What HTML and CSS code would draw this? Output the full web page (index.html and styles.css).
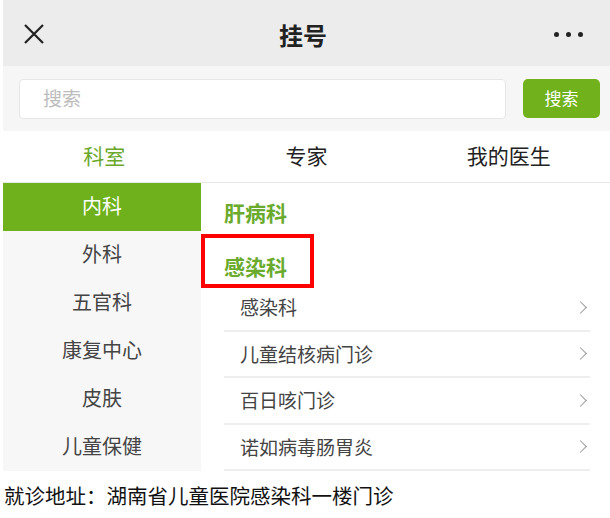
FILE: index.html
```html
<!DOCTYPE html>
<html lang="zh-CN">
<head>
    <meta charset="UTF-8">
    <meta name="viewport" content="width=device-width, initial-scale=1.0">
    <title>挂号</title>
    <link rel="stylesheet" href="styles.css">
</head>
<body>
    <div class="app">
        <div class="topbar">
            <span class="topbar-close">
                <svg width="22" height="22" viewBox="0 0 22 22"><path d="M2 2 L20 20 M20 2 L2 20" stroke="#222" stroke-width="2.2" fill="none"/></svg>
            </span>
            <span class="topbar-title">挂号</span>
            <span class="topbar-more"><i></i><i></i><i></i></span>
        </div>

        <div class="search">
            <div class="search-input">搜索</div>
            <button class="search-btn">搜索</button>
        </div>

        <div class="tabs">
            <div class="tab active">科室</div>
            <div class="tab">专家</div>
            <div class="tab">我的医生</div>
        </div>

        <div class="content">
            <ul class="side">
                <li class="side-item active">内科</li>
                <li class="side-item">外科</li>
                <li class="side-item">五官科</li>
                <li class="side-item">康复中心</li>
                <li class="side-item">皮肤</li>
                <li class="side-item">儿童保健</li>
            </ul>
            <div class="panel">
                <div class="group-title">肝病科</div>
                <div class="group-title marked">感染科</div>
                <ul class="dept-list">
                    <li class="dept">感染科<span class="chev"></span></li>
                    <li class="dept">儿童结核病门诊<span class="chev"></span></li>
                    <li class="dept">百日咳门诊<span class="chev"></span></li>
                    <li class="dept">诺如病毒肠胃炎<span class="chev"></span></li>
                </ul>
            </div>
        </div>

        <p class="address">就诊地址：湖南省儿童医院感染科一楼门诊</p>
    </div>
</body>
</html>
```

FILE: styles.css
```css
* {
    box-sizing: border-box;
}
body {
    margin: 0;
    background: #fff;
    font-family: "Noto Sans CJK SC", "Noto Sans", sans-serif;
    color: #333;
}
ul {
    margin: 0;
    padding: 0;
    list-style: none;
}
.app {
    margin-left: 3px;
    width: 607px;
}

.topbar {
    height: 66px;
    background: #ececec;
    display: flex;
    align-items: center;
    padding: 0 27px 0 20px;
}
.topbar-close {
    width: 60px;
    display: flex;
    padding-top: 1px;
}
.topbar-title {
    flex: 1;
    text-align: center;
    font-size: 24px;
    font-weight: bold;
    color: #222;
    padding-top: 2px;
}
.topbar-more {
    width: 60px;
    display: flex;
    justify-content: flex-end;
    gap: 7px;
    padding-top: 2px;
}
.topbar-more i {
    width: 5px;
    height: 5px;
    border-radius: 50%;
    background: #222;
}

.search {
    height: 65px;
    background: #f6f6f6;
    display: flex;
    align-items: center;
    padding: 0 10px 0 16px;
    gap: 17px;
}
.search-input {
    flex: 1;
    height: 40px;
    background: #fff;
    border: 1px solid #e6e6e6;
    border-radius: 4px;
    padding-left: 23px;
    font-size: 19px;
    line-height: 35px;
    color: #bdbdbd;
}
.search-btn {
    width: 77px;
    height: 39px;
    border: 0;
    border-radius: 5px;
    background: #71b21c;
    color: #fff;
    font-family: inherit;
    font-size: 17px;
    padding-bottom: 3px;
}

.tabs {
    display: flex;
    height: 52px;
    border-bottom: 1px solid #e8e8e8;
}
.tab {
    flex: 1;
    text-align: center;
    font-size: 21px;
    line-height: 48px;
    color: #222;
}
.tab.active {
    color: #6aa82a;
}

.content {
    display: flex;
}
.side {
    width: 198px;
    background: #f7f7f7;
}
.side-item {
    height: 48px;
    line-height: 46px;
    text-align: center;
    font-size: 20px;
    color: #444;
}
.side-item.active {
    background: #6eb11c;
    color: #fff;
}

.panel {
    flex: 1;
}
.group-title {
    height: 51px;
    padding-left: 23px;
    font-size: 21px;
    font-weight: bold;
    line-height: 58px;
    color: #6aaa2c;
}
.group-title.marked {
    width: fit-content;
    height: 54px;
    line-height: 56px;
    padding: 0 23px 0 19px;
    border: 4px solid #f00;
}
.dept-list {
    margin: -3px 20px 0 23px;
}
.dept {
    height: 46.5px;
    line-height: 40px;
    padding-left: 16px;
    font-size: 19px;
    color: #444;
    border-bottom: 2px solid #eeeeee;
    display: flex;
    justify-content: space-between;
    align-items: center;
}
.chev {
    width: 9px;
    height: 9px;
    border-top: 1px solid #999;
    border-right: 1px solid #999;
    transform: rotate(45deg);
    margin-right: 5px;
}

.address {
    margin: 0;
    padding-top: 9px;
    font-size: 20.5px;
    color: #111;
    padding-left: 1px;
}
```
